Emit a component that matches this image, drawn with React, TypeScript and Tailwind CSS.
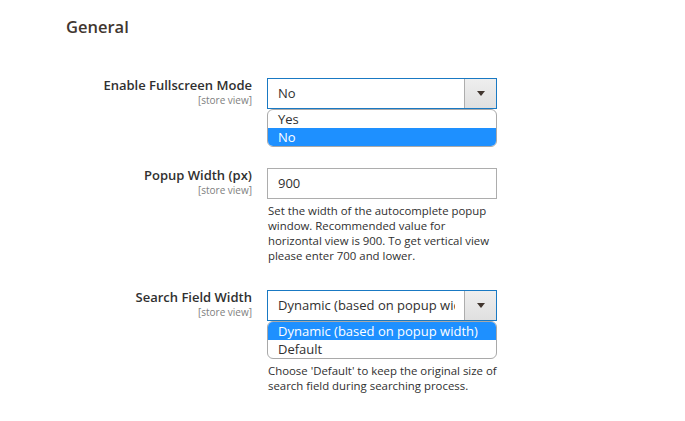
import React from "react";

type Opt = { label: string; selected?: boolean };

function Label({ text }: { text: string }) {
  return (
    <div className="w-[186px] shrink-0 text-right">
      <div className="text-[13px] leading-[14px] font-semibold text-[#303030]">{text}</div>
      <div className="mt-[2px] text-[10px] leading-[12px] text-[#808080]">[store view]</div>
    </div>
  );
}

function SelectBox({ value, options }: { value: string; options: Opt[] }) {
  return (
    <div className="w-[230px]">
      <div className="flex h-[31px] border border-[#1979c3] bg-white">
        <div className="ml-[10px] mr-[9px] flex-1 overflow-hidden whitespace-nowrap text-[13px] leading-[29px] text-[#303030]">
          {value}
        </div>
        <div className="flex w-[32px] shrink-0 items-center justify-center border-l border-[#adadad] bg-gradient-to-b from-[#eeeeee] to-[#e0e0e0]">
          <svg width="8" height="5" viewBox="0 0 8 5">
            <path d="M0 0 H8 L4 5 Z" fill="#41362f" />
          </svg>
        </div>
      </div>
      <ul className="overflow-hidden rounded-[6px] border border-[#a9a9a9] bg-white">
        {options.map((o) => (
          <li
            key={o.label}
            className={
              o.selected
                ? "h-[18px] bg-[#1e90ff] pl-[10px] text-[13px] leading-[18px] text-white"
                : "h-[18px] pl-[10px] text-[13px] leading-[18px] text-[#303030]"
            }
          >
            {o.label}
          </li>
        ))}
      </ul>
    </div>
  );
}

function Note({ lines }: { lines: string[] }) {
  return (
    <p className="pl-px text-[11.4px] leading-[15px] whitespace-nowrap text-[#303030]">
      {lines.map((l) => (
        <span key={l} className="block">
          {l}
        </span>
      ))}
    </p>
  );
}

export default function App() {
  return (
    <div className="h-[421px] w-[685px] bg-white pl-[66px] pt-[16px] font-['Open_Sans',sans-serif]">
      <h2 className="text-[16.5px] font-semibold leading-[22px] text-[#41362f]">General</h2>

      <div className="mt-[40px] flex gap-[15px]">
        <Label text="Enable Fullscreen Mode" />
        <SelectBox value="No" options={[{ label: "Yes" }, { label: "No", selected: true }]} />
      </div>

      <div className="mt-[21px] flex gap-[15px]">
        <Label text="Popup Width (px)" />
        <div className="w-[230px]">
          <div className="h-[31px] border border-[#adadad] bg-white pl-[10px] text-[13px] leading-[29px] text-[#303030]">
            900
          </div>
          <div className="mt-[4px]">
            <Note
              lines={[
                "Set the width of the autocomplete popup",
                "window. Recommended value for",
                "horizontal view is 900. To get vertical view",
                "please enter 700 and lower.",
              ]}
            />
          </div>
        </div>
      </div>

      <div className="mt-[27px] flex gap-[15px]">
        <Label text="Search Field Width" />
        <div className="w-[230px]">
          <SelectBox
            value="Dynamic (based on popup width)"
            options={[{ label: "Dynamic (based on popup width)", selected: true }, { label: "Default" }]}
          />
          <div className="mt-[4px]">
            <Note
              lines={[
                "Choose 'Default' to keep the original size of",
                "search field during searching process.",
              ]}
            />
          </div>
        </div>
      </div>
    </div>
  );
}
